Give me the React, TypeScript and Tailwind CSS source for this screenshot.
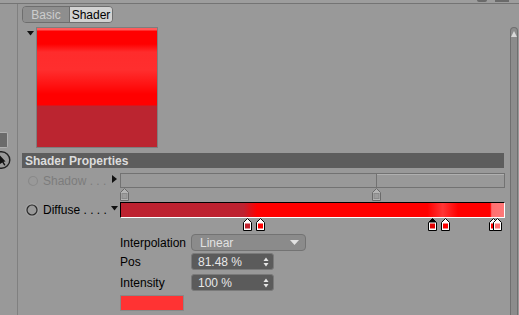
import React from "react";

type KnobProps = { x: number; color: string; active?: boolean; muted?: boolean };

const Knob = ({ x, color, active, muted }: KnobProps) => (
  <svg
    className="absolute top-0"
    style={{ left: x }}
    width="9"
    height="13"
    viewBox="0 0 9 13"
  >
    <path
      d="M0.5 12.5V4.5L4.5 0.5L8.5 4.5V12.5Z"
      fill={muted ? "#b4b4b4" : "#ffffff"}
      stroke={muted ? "#6a6a6a" : "#000000"}
    />
    {active && <path d="M0.5 4.5L4.5 0.5L8.5 4.5Z" fill="#000" />}
    <rect
      x="2"
      y="5.5"
      width="5"
      height="5"
      fill={color}
      stroke={muted ? "#8a8a8a" : "none"}
      strokeWidth={muted ? 1 : 0}
    />
  </svg>
);

const diffuseKnobs: KnobProps[] = [
  { x: 123, color: "#c0222e" },
  { x: 136, color: "#ff0000" },
  { x: 308, color: "#e00000", active: true },
  { x: 321, color: "#ff0000" },
  { x: 369, color: "#ff0000" },
  { x: 373, color: "#ff7272" },
];

const Spinner = () => (
  <svg width="6" height="10" viewBox="0 0 6 10" className="mr-[4px]">
    <path d="M3 0.5L5.5 4H0.5Z" fill="#e6e6e6" />
    <path d="M3 9.5L5.5 6H0.5Z" fill="#e6e6e6" />
  </svg>
);

export default function App() {
  return (
    <div className="relative h-[315px] w-[519px] overflow-hidden bg-[#999999] font-['Liberation_Sans',Arial,sans-serif] text-[12px] text-black">
      {/* top strip */}
      <div className="flex h-[3px] justify-end gap-[8px] bg-[#9d9d9d] pr-[10px]">
        <div className="h-[2px] w-[10px] rounded-b-[2px] bg-[#6a6a6a]" />
        <div className="h-[2px] w-[14px] bg-[#6a6a6a]" />
      </div>
      <div className="h-px bg-[#747474]" />

      <div className="flex h-[311px]">
        {/* left sidebar */}
        <div className="flex w-[18px] flex-col border-r border-[#808080]">
          <div className="mt-[128px] h-[16px] w-[8px] rounded-r-[2px] border border-l-0 border-[#b0b0b0] bg-[#6b6b6b]" />
          <svg width="11" height="18" viewBox="0 0 11 18" className="mt-[3px]">
            <circle cx="1.5" cy="9" r="8.3" fill="none" stroke="#222" strokeWidth="1.4" />
            <path d="M0 4.5L5.5 10.5L3.5 10.8L5.5 14L4.2 14.6L2.3 11.4L0 13Z" fill="#111" />
          </svg>
        </div>

        {/* main */}
        <div className="flex flex-1 flex-col pl-[4px]">
          {/* tabs */}
          <div className="mt-[2px] flex h-[17px] w-[91px] overflow-hidden rounded-[4px] border border-[#6e6e6e]">
            <div className="flex w-[46px] items-center justify-center bg-[#8e8e8e] text-[12px] text-[#cdcdcd]">
              Basic
            </div>
            <div className="flex flex-1 items-center justify-center border-l border-[#6e6e6e] bg-[#d2d2d2] text-[12px] text-black">
              Shader
            </div>
          </div>

          {/* preview */}
          <div className="mt-[4px] flex">
            <svg width="8" height="5" viewBox="0 0 8 5" className="ml-[5px] mt-[4px]">
              <path d="M0 0H7L3.5 4.5Z" fill="#111" />
            </svg>
            <div className="ml-[1px] h-[121px] w-[122px] border border-[#7e7e7e] bg-[linear-gradient(to_bottom,#ff5a5a_0px,#ff5a5a_2px,#ff0000_3px,#ff0000_16px,#ff2c2c_24px,#ff2e2e_42px,#ff1414_56px,#ff0000_66px,#ff0000_77px,#bb2530_78px,#bb2530_100%)]" />
          </div>

          {/* header */}
          <div className="mt-[5px] mr-[4px] flex h-[15px] items-center bg-[#5d5d5d] pl-[3px] text-[12px] font-bold text-[#dcdcdc]">
            Shader Properties
          </div>

          {/* shadow row */}
          <div className="mt-[5px] flex h-[15px] items-center">
            <svg width="12" height="12" viewBox="0 0 12 12" className="ml-[5px]">
              <circle cx="6" cy="6" r="4.5" fill="none" stroke="#8a8a8a" strokeWidth="1.2" />
            </svg>
            <span className="ml-[4px] w-[69px] text-[#7c7c7c]">Shadow . . .</span>
            <svg width="5" height="8" viewBox="0 0 5 8" className="-mt-[3px]">
              <path d="M0 0L5 4L0 8Z" fill="#111" />
            </svg>
            <div className="relative ml-[3px] flex h-[15px] w-[385px] border border-[#727272]">
              <div className="w-[256px] border-r border-[#727272]" />
              <div className="flex-1 border-t border-[#b0b0b0]" />
            </div>
          </div>
          <div className="relative ml-[98px] h-[13px]">
            <Knob x={0} color="#9c9c9c" muted />
            <Knob x={252} color="#9c9c9c" muted />
          </div>

          {/* diffuse row */}
          <div className="mt-[1px] flex h-[16px] items-center">
            <svg width="14" height="14" viewBox="0 0 14 14" className="ml-[3px]">
              <circle cx="7" cy="7" r="6.3" fill="none" stroke="#a9a9a9" strokeWidth="1" />
              <circle cx="7" cy="7" r="5" fill="none" stroke="#2a2a2a" strokeWidth="1.2" />
            </svg>
            <span className="ml-[4px] w-[64px]">Diffuse . . . .</span>
            <svg width="8" height="5" viewBox="0 0 8 5" className="-mt-[4px] ml-[4px]">
              <path d="M0 0H7L3.5 4.5Z" fill="#111" />
            </svg>
            <div className="ml-[1px] h-[16px] w-[385px] border-t border-b border-l border-r border-t-black border-b-white border-l-black border-r-white bg-[linear-gradient(to_right,#bd2230_0%,#be2230_32%,#ff0000_35.5%,#ff0000_80%,#ff3636_84%,#ff0000_88%,#ff0000_96.4%,#ff7070_96.8%,#ff7878_100%)]" />
          </div>
          <div className="relative ml-[98px] h-[13px]">
            {diffuseKnobs.map((k, i) => (
              <Knob key={i} {...k} />
            ))}
          </div>

          {/* parameters */}
          <div className="ml-[98px] mt-[3px] flex flex-col">
            <div className="flex h-[17px] items-center">
              <span className="w-[71px]">Interpolation</span>
              <div className="flex h-[17px] w-[115px] items-center justify-between rounded-[4px] border border-[#737373] bg-[#8b8b8b] pl-[8px] pr-[6px] text-[#e2e2e2]">
                <span>Linear</span>
                <svg width="9" height="5" viewBox="0 0 9 5">
                  <path d="M0 0H9L4.5 5Z" fill="#e2e2e2" />
                </svg>
              </div>
            </div>
            <div className="mt-[2px] flex h-[17px] items-center">
              <span className="w-[71px]">Pos</span>
              <div className="flex h-[17px] w-[83px] items-center justify-between rounded-[3px] border border-[#7a7a7a] bg-[#5b5b5b] pl-[6px] text-[#e8e8e8]">
                <span>81.48 %</span>
                <Spinner />
              </div>
            </div>
            <div className="mt-[4px] flex h-[17px] items-center">
              <span className="w-[71px]">Intensity</span>
              <div className="flex h-[17px] w-[83px] items-center justify-between rounded-[3px] border border-[#7a7a7a] bg-[#5b5b5b] pl-[6px] text-[#e8e8e8]">
                <span>100 %</span>
                <Spinner />
              </div>
            </div>
            <div className="mt-[4px] h-[16px] w-[64px] border border-[#888888] bg-[#ff3333]" />
          </div>
        </div>

        {/* scrollbar */}
        <div className="ml-[2px] mr-[1px] mt-[23px] flex w-[8px] flex-col items-center rounded-t-[4px] border-l border-r border-t border-[#6f6f6f] bg-[#8c8c8c]">
          <svg width="6" height="6" viewBox="0 0 6 6" className="mt-[3px]">
            <path d="M3 0L6 6H0Z" fill="#d8d8d8" />
          </svg>
        </div>
      </div>
    </div>
  );
}
